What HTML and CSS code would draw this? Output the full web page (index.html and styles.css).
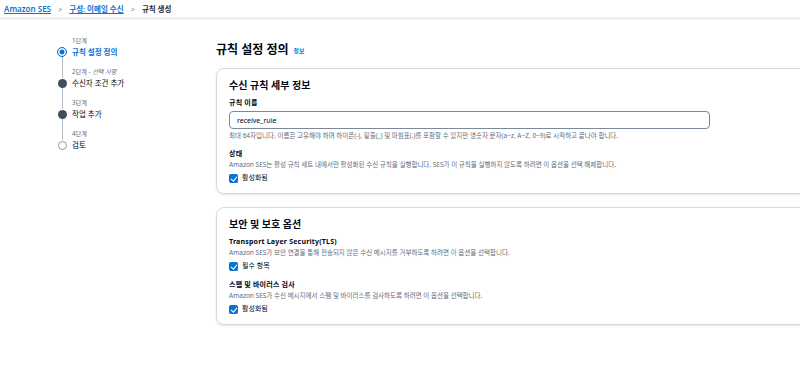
FILE: index.html
```html
<!DOCTYPE html>
<html lang="ko">
<head>
  <meta charset="UTF-8">
  <meta name="viewport" content="width=device-width, initial-scale=1.0">
  <title>규칙 생성 - Amazon SES</title>
  <link rel="stylesheet" href="styles.css">
</head>
<body>
  <nav class="breadcrumbs">
    <a href="#" class="home">Amazon SES</a>
    <span class="sep">&gt;</span>
    <a href="#">구성: 이메일 수신</a>
    <span class="sep">&gt;</span>
    <span class="current">규칙 생성</span>
  </nav>

  <div class="layout">
    <ol class="steps">
      <li class="step active first">
        <div class="rail"><span class="top"></span><span class="dot"></span><span class="line"></span></div>
        <div class="step-text"><small>1단계</small><span>규칙 설정 정의</span></div>
      </li>
      <li class="step done">
        <div class="rail"><span class="top"></span><span class="dot"></span><span class="line"></span></div>
        <div class="step-text"><small>2단계 - <i>선택 사항</i></small><span>수신자 조건 추가</span></div>
      </li>
      <li class="step done">
        <div class="rail"><span class="top"></span><span class="dot"></span><span class="line"></span></div>
        <div class="step-text"><small>3단계</small><span>작업 추가</span></div>
      </li>
      <li class="step todo last">
        <div class="rail"><span class="top"></span><span class="dot"></span><span class="line"></span></div>
        <div class="step-text"><small>4단계</small><span>검토</span></div>
      </li>
    </ol>

    <main class="content">
      <h1>규칙 설정 정의 <a href="#" class="info">정보</a></h1>

      <section class="card">
        <h2>수신 규칙 세부 정보</h2>
        <div class="field">
          <label for="rule-name">규칙 이름</label>
          <input type="text" id="rule-name" value="receive_rule">
          <p class="hint">최대 64자입니다. 이름은 고유해야 하며 하이픈(-), 밑줄(_) 및 마침표(.)를 포함할 수 있지만 영숫자 문자(a~z, A~Z, 0~9)로 시작하고 끝나야 합니다.</p>
        </div>
        <div class="field">
          <span class="label">상태</span>
          <p class="desc">Amazon SES는 활성 규칙 세트 내에서만 활성화된 수신 규칙을 실행합니다. SES가 이 규칙을 실행하지 않도록 하려면 이 옵션을 선택 해제합니다.</p>
          <div class="check"><span class="box"></span>활성화됨</div>
        </div>
      </section>

      <section class="card">
        <h2>보안 및 보호 옵션</h2>
        <div class="field">
          <span class="label">Transport Layer Security(TLS)</span>
          <p class="desc">Amazon SES가 보안 연결을 통해 전송되지 않은 수신 메시지를 거부하도록 하려면 이 옵션을 선택합니다.</p>
          <div class="check"><span class="box"></span>필수 항목</div>
        </div>
        <div class="field">
          <span class="label">스팸 및 바이러스 검사</span>
          <p class="desc">Amazon SES가 수신 메시지에서 스팸 및 바이러스를 검사하도록 하려면 이 옵션을 선택합니다.</p>
          <div class="check"><span class="box"></span>활성화됨</div>
        </div>
      </section>
    </main>
  </div>
</body>
</html>
```

FILE: styles.css
```css
/* page base */
body {
  margin: 0;
  font-family: "Noto Sans", "Noto Sans CJK KR", sans-serif;
  color: #000716;
  background: #ffffff;
  overflow: hidden;
}

a {
  color: #0972d3;
}

/* breadcrumb bar at the top */
.breadcrumbs {
  height: 18px;
  padding: 0 4px;
  display: flex;
  align-items: center;
  gap: 7px;
  font-size: 7.5px;
  line-height: 16px;
  box-shadow: 0 1px 2px rgba(0, 7, 22, 0.12);
  border-bottom: 1px solid #eef0f2;
  box-sizing: border-box;
}

.breadcrumbs a {
  font-weight: 600;
}

.breadcrumbs .home {
  font-size: 8px;
}

.breadcrumbs .sep {
  color: #7d8998;
}

.breadcrumbs .current {
  color: #232f3e;
  font-weight: 600;
}

.layout {
  display: flex;
}

/* wizard steps on the left */
.steps {
  list-style: none;
  margin: 0;
  padding: 18px 0 0 57px;
  width: 159px;
  flex-shrink: 0;
}

.step {
  display: flex;
  gap: 5px;
}

.rail {
  width: 10px;
  display: flex;
  flex-direction: column;
  align-items: center;
}

.rail .top {
  height: 11px;
  width: 1px;
  background: #b6bec9;
}

.rail .line {
  flex: 1;
  width: 1px;
  background: #b6bec9;
}

.first .rail .top {
  background: transparent;
}

.last .rail .line {
  background: transparent;
}

.dot {
  width: 10px;
  height: 10px;
  border-radius: 50%;
  box-sizing: border-box;
}

.active .dot {
  border: 1.5px solid #0972d3;
  background: #0972d3;
  box-shadow: inset 0 0 0 1.5px #ffffff;
}

.done .dot {
  width: 9px;
  height: 9px;
  margin: 0.5px 0;
  background: #414d5c;
}

.todo .dot {
  width: 9px;
  height: 9px;
  margin: 0.5px 0;
  border: 1px solid #8d99a8;
}

.step-text {
  display: flex;
  flex-direction: column;
  padding-bottom: 9px;
}

.step:last-child .step-text {
  padding-bottom: 0;
}

.step-text small {
  font-size: 6.2px;
  line-height: 10px;
  color: #5f6b7a;
}

.step-text span {
  font-size: 7.5px;
  line-height: 12px;
  color: #000716;
}

.active .step-text span {
  color: #0972d3;
  font-weight: 700;
}

/* main column */
.content {
  padding-top: 23px;
  width: 620px;
  flex-shrink: 0;
}

h1 {
  margin: 0 0 8px;
  font-size: 12px;
  line-height: 18px;
  font-weight: 700;
}

h1 .info {
  font-size: 5.8px;
  font-weight: 700;
  text-decoration: none;
  vertical-align: 1px;
  margin-left: 2px;
}

.card {
  border: 1px solid #d5dbdb;
  border-radius: 8px;
  box-shadow: 0 1px 2px rgba(0, 7, 22, 0.12);
  padding: 9px 12px 10px;
  margin-bottom: 13px;
  display: flex;
  flex-direction: column;
  gap: 9px;
}

h2 {
  margin: 0 0 -3px;
  font-size: 10px;
  line-height: 14px;
  font-weight: 700;
}

.field {
  display: flex;
  flex-direction: column;
}

.field label,
.field .label {
  font-size: 7px;
  line-height: 10px;
  font-weight: 700;
  letter-spacing: 0.2px;
}

.field input {
  margin-top: 3px;
  width: 481px;
  height: 18px;
  box-sizing: border-box;
  border: 1px solid #7d8998;
  border-radius: 4px;
  padding: 0 7px;
  font-family: inherit;
  font-size: 7px;
  color: #000716;
}

.hint,
.desc {
  margin: 2px 0 0;
  font-size: 6.5px;
  line-height: 8px;
  color: #5f6b7a;
}

.hint {
  margin-top: 3px;
}

.check {
  margin-top: 4px;
  display: flex;
  align-items: center;
  gap: 4px;
  font-size: 7px;
  line-height: 10px;
}

.box {
  width: 9px;
  height: 9px;
  border-radius: 2px;
  background: #0972d3;
  position: relative;
}

/* tick mark inside the checkbox */
.box::after {
  content: "";
  position: absolute;
  left: 2.5px;
  top: 1px;
  width: 2.5px;
  height: 5px;
  border: solid #ffffff;
  border-width: 0 1.3px 1.3px 0;
  transform: rotate(40deg);
}
```
